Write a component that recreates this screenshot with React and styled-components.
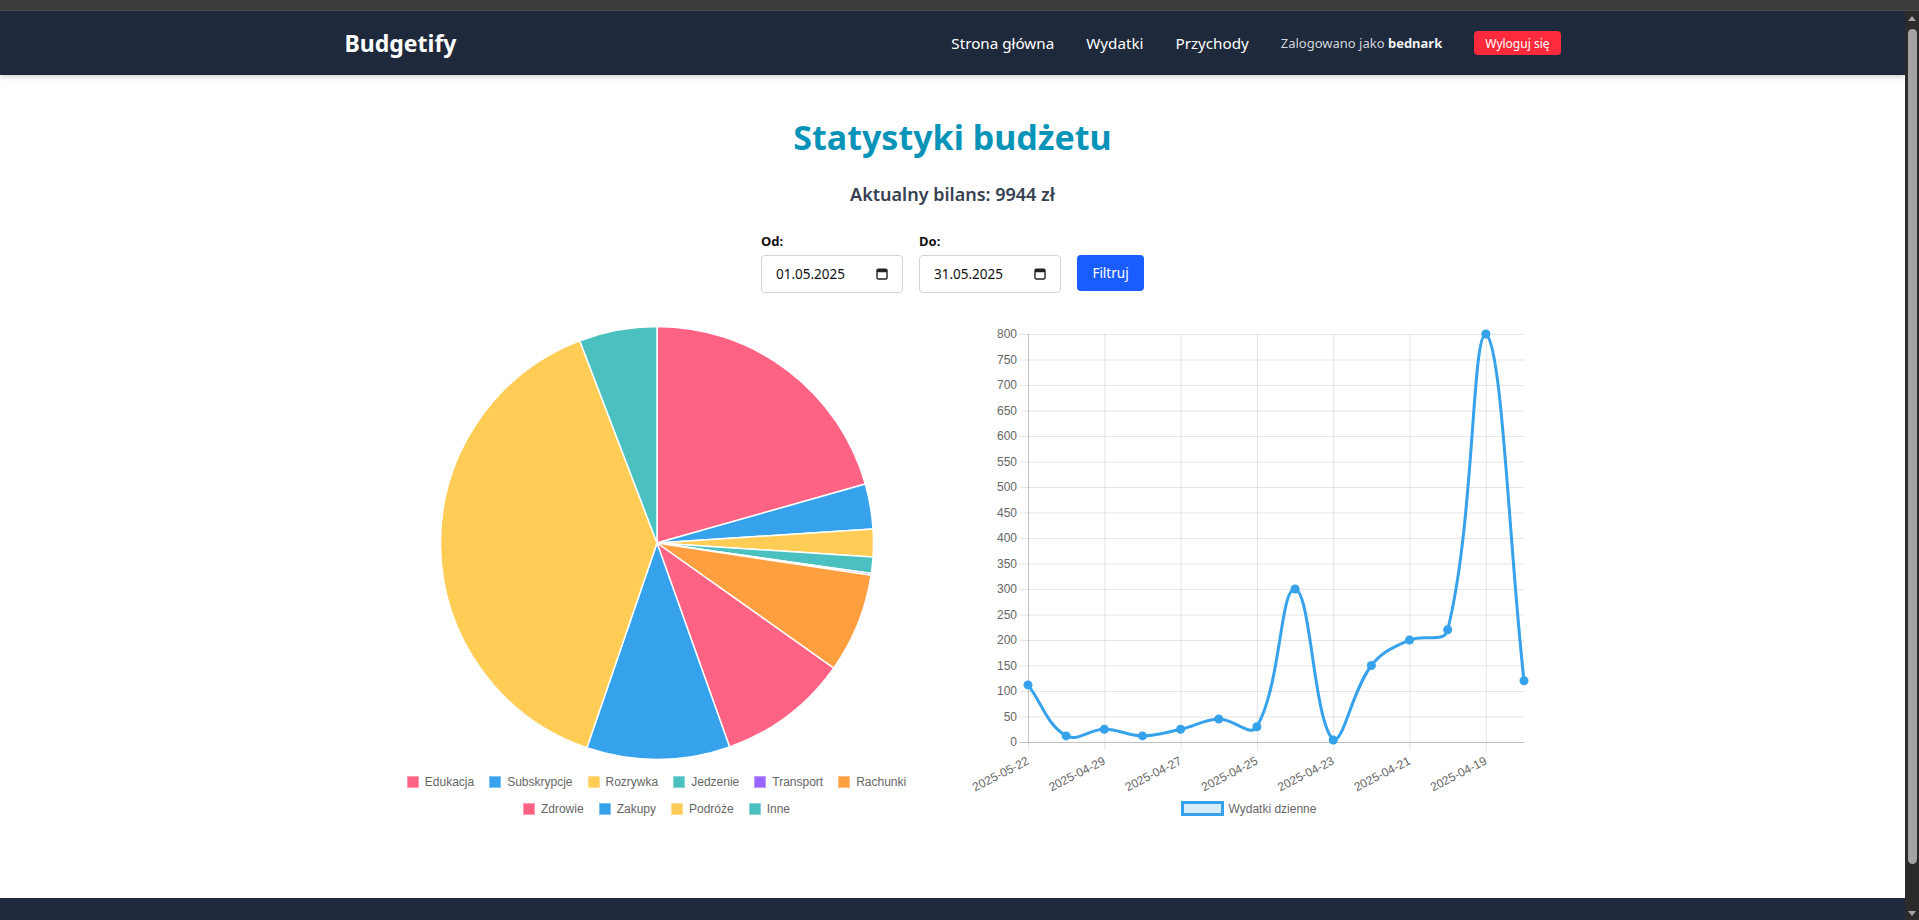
import React from 'react';
import styled, { createGlobalStyle } from 'styled-components';

const GlobalStyle = createGlobalStyle`
  html, body { margin: 0; padding: 0; height: 100%; overflow: hidden; }
  body { font-family: "Noto Sans", "Open Sans", sans-serif; background: #3b3b3b; }
  #root { height: 100%; }
  * { box-sizing: border-box; }
`;

const Frame = styled.div`
  height: 100vh;
  display: flex;
  flex-direction: column;
`;

const TopStrip = styled.div`
  height: 11px;
  flex-shrink: 0;
  background: #3b3b3b;
  border-bottom: 1px solid #4d4d4d;
`;

const Body = styled.div`
  flex: 1;
  min-height: 0;
  display: flex;
`;

const Viewport = styled.div`
  flex: 1;
  min-width: 0;
  overflow: hidden;
  background: #fff;
  display: flex;
  flex-direction: column;
`;

const Scrollbar = styled.div`
  width: 14px;
  flex-shrink: 0;
  background: #2b2b2b;
  display: flex;
  flex-direction: column;
  align-items: center;
  padding: 5px 0 4px;
`;

const Arrow = styled.span`
  width: 0;
  height: 0;
  border-left: 4.5px solid transparent;
  border-right: 4.5px solid transparent;
  ${p => (p.$down ? 'border-top: 5px solid #a3a3a3;' : 'border-bottom: 5px solid #a3a3a3;')}
`;

const Thumb = styled.span`
  width: 9px;
  height: 835px;
  margin: 8px 0 auto;
  border-radius: 4.5px;
  background: #a3a3a3;
`;

const Nav = styled.nav`
  flex-shrink: 0;
  height: 64px;
  background: #1e293b;
  box-shadow: 0 2px 5px rgba(0, 0, 0, 0.18);
  position: relative;
  z-index: 1;
`;

const Container = styled.div`
  max-width: 1280px;
  margin: 0 auto;
  padding: 0 32px;
  height: 100%;
`;

const NavInner = styled(Container)`
  display: flex;
  align-items: center;
  justify-content: space-between;
`;

const Brand = styled.a`
  color: #fff;
  font-weight: 700;
  font-size: 23px;
  text-decoration: none;
`;

const NavLinks = styled.div`
  display: flex;
  align-items: center;
  gap: 32px;
`;

const NavLink = styled.a`
  color: #fff;
  font-size: 15.2px;
  text-decoration: none;
`;

const UserInfo = styled.span`
  color: #d1d5db;
  font-size: 13px;
  b { color: #f3f4f6; font-weight: 700; }
`;

const LogoutButton = styled.button`
  height: 24px;
  padding: 0 11px;
  border: none;
  border-radius: 4px;
  background: #ff2b3c;
  color: #fff;
  font-family: inherit;
  font-size: 12px;
`;

const Main = styled.main`
  flex-shrink: 0;
  padding: 42px 0 82px;
  text-align: center;
`;

const Title = styled.h1`
  margin: 0;
  font-size: 34px;
  line-height: 40px;
  font-weight: 700;
  color: #0893b9;
`;

const Balance = styled.p`
  margin: 23px 0 0;
  font-size: 18px;
  line-height: 28px;
  font-weight: 600;
  color: #374151;
`;

const FilterRow = styled.form`
  margin-top: 23px;
  display: flex;
  justify-content: center;
  align-items: flex-end;
  gap: 16px;
`;

const Field = styled.div`
  display: flex;
  flex-direction: column;
  gap: 4px;
  text-align: left;
`;

const FieldLabel = styled.label`
  font-size: 13px;
  line-height: 20px;
  font-weight: 700;
  color: #111;
`;

const DateBox = styled.div`
  width: 142px;
  height: 38px;
  border: 1px solid #d1d5db;
  border-radius: 4px;
  padding: 0 14px;
  display: flex;
  align-items: center;
  gap: 8px;
`;

const DateInput = styled.input`
  flex: 1;
  min-width: 0;
  border: none;
  outline: none;
  padding: 0;
  background: transparent;
  font-family: "Noto Sans", sans-serif;
  font-size: 13.5px;
  color: #111;
`;

const FilterButton = styled.button`
  width: 67px;
  height: 36px;
  margin-bottom: 2px;
  border: none;
  border-radius: 4px;
  background: #195cff;
  color: #fff;
  font-family: inherit;
  font-size: 13.5px;
`;

const ChartsRow = styled.section`
  margin-top: 33px;
  display: flex;
  justify-content: center;
  align-items: flex-start;
  gap: 32px;
`;

const ChartCard = styled.div`
  width: 560px;
  display: flex;
  flex-direction: column;
`;

const ChartSvg = styled.svg`
  display: block;
  font-family: "Liberation Sans", Arial, sans-serif;
`;

const Legend = styled.div`
  display: flex;
  flex-wrap: wrap;
  justify-content: center;
  column-gap: 15px;
  row-gap: 15px;
  padding-top: ${p => p.$top}px;
`;

const LegendItem = styled.span`
  display: flex;
  align-items: center;
  gap: ${p => (p.$wide ? 5 : 6)}px;
  height: ${p => (p.$wide ? 15 : 12)}px;
  font-family: "Liberation Sans", Arial, sans-serif;
  font-size: 12px;
  line-height: 12px;
  color: #666;
`;

const Swatch = styled.span`
  width: 12px;
  height: 12px;
  background: ${p => p.$color};
  box-shadow: inset 0 0 0 1px rgba(255, 255, 255, 0.35);
`;

const WideSwatch = styled.span`
  width: 43px;
  height: 15px;
  border: 3px solid #36a2eb;
  background: rgba(54, 162, 235, 0.2);
`;

const Footer = styled.footer`
  flex-shrink: 0;
  height: 67px;
  background: #1e293b;
`;

const PINK = '#ff6384';
const BLUE = '#36a2eb';
const YELLOW = '#ffcd56';
const TEAL = '#4bc0c0';
const PURPLE = '#9966ff';
const ORANGE = '#ff9f40';

const categories = [
  { name: 'Edukacja', value: 742, color: PINK },
  { name: 'Subskrypcje', value: 121, color: BLUE },
  { name: 'Rozrywka', value: 74, color: YELLOW },
  { name: 'Jedzenie', value: 44, color: TEAL },
  { name: 'Transport', value: 5, color: PURPLE },
  { name: 'Rachunki', value: 267, color: ORANGE },
  { name: 'Zdrowie', value: 351, color: PINK },
  { name: 'Zakupy', value: 385, color: BLUE },
  { name: 'Podróże', value: 1402, color: YELLOW },
  { name: 'Inne', value: 209, color: TEAL },
];

const daily = [
  ['2025-05-22', 112], ['2025-04-30', 12], ['2025-04-29', 25], ['2025-04-28', 12],
  ['2025-04-27', 25], ['2025-04-26', 45], ['2025-04-25', 30], ['2025-04-24', 300],
  ['2025-04-23', 4], ['2025-04-22', 150], ['2025-04-21', 200], ['2025-04-20', 220],
  ['2025-04-19', 800], ['2025-04-18', 120],
];

function PieChart() {
  const cx = 280, cy = 217, r = 216.5;
  const total = categories.reduce((s, c) => s + c.value, 0);
  let acc = 0;
  const slices = categories.map(c => {
    const a0 = (acc / total) * Math.PI * 2 - Math.PI / 2;
    acc += c.value;
    const a1 = (acc / total) * Math.PI * 2 - Math.PI / 2;
    const large = a1 - a0 > Math.PI ? 1 : 0;
    const x0 = cx + r * Math.cos(a0), y0 = cy + r * Math.sin(a0);
    const x1 = cx + r * Math.cos(a1), y1 = cy + r * Math.sin(a1);
    const d = `M${cx},${cy} L${x0.toFixed(2)},${y0.toFixed(2)} A${r},${r} 0 ${large} 1 ${x1.toFixed(2)},${y1.toFixed(2)} Z`;
    return <path key={c.name} d={d} fill={c.color} stroke="#fff" strokeWidth="1.5" strokeLinejoin="round" />;
  });
  return (
    <ChartCard>
      <ChartSvg width="560" height="434" viewBox="0 0 560 434">{slices}</ChartSvg>
      <Legend $top={16}>
        {categories.map(c => (
          <LegendItem key={c.name}>
            <Swatch $color={c.color} />
            {c.name}
          </LegendItem>
        ))}
      </Legend>
    </ChartCard>
  );
}

function LineChart() {
  const L = 59, R = 555, T = 8, B = 416;
  const n = daily.length;
  const step = (R - L) / (n - 1);
  const yOf = v => B - (v / 800) * (B - T);
  const pts = daily.map(([, v], i) => ({ x: L + i * step, y: yOf(v) }));
  const t = 0.4;
  const cap = (v, lo, hi) => Math.max(Math.min(v, hi), lo);
  const cps = pts.map((p, i) => {
    const prev = pts[i - 1] || p;
    const next = pts[i + 1] || p;
    const d01 = Math.hypot(p.x - prev.x, p.y - prev.y);
    const d12 = Math.hypot(next.x - p.x, next.y - p.y);
    let s01 = d01 / (d01 + d12);
    let s12 = d12 / (d01 + d12);
    if (isNaN(s01)) s01 = 0;
    if (isNaN(s12)) s12 = 0;
    const fa = t * s01, fb = t * s12;
    return {
      c1x: cap(p.x - fa * (next.x - prev.x), L, R),
      c1y: cap(p.y - fa * (next.y - prev.y), T, B),
      c2x: cap(p.x + fb * (next.x - prev.x), L, R),
      c2y: cap(p.y + fb * (next.y - prev.y), T, B),
    };
  });
  let d = `M${pts[0].x},${pts[0].y}`;
  for (let i = 1; i < n; i++) {
    d += ` C${cps[i - 1].c2x.toFixed(2)},${cps[i - 1].c2y.toFixed(2)} ${cps[i].c1x.toFixed(2)},${cps[i].c1y.toFixed(2)} ${pts[i].x.toFixed(2)},${pts[i].y.toFixed(2)}`;
  }
  const ticks = [];
  for (let v = 0; v <= 800; v += 50) ticks.push(v);
  const grid = 'rgba(0,0,0,0.1)';
  return (
    <ChartCard>
      <ChartSvg width="560" height="475" viewBox="0 0 560 475">
        {ticks.map(v => (
          <g key={v}>
            <line x1={L - 8} x2={R} y1={yOf(v) + 0.5} y2={yOf(v) + 0.5} stroke={grid} />
            <text x={L - 11} y={yOf(v)} textAnchor="end" dominantBaseline="central" fontSize="12" fill="#666">{v}</text>
          </g>
        ))}
        {daily.map(([label], i) => (i % 2 === 0 ? (
          <g key={label}>
            <line x1={L + i * step + 0.5} x2={L + i * step + 0.5} y1={T} y2={B + 8} stroke={grid} />
            <text
              x={L + i * step}
              y={B + 18}
              textAnchor="end"
              dominantBaseline="central"
              fontSize="12"
              fill="#666"
              transform={`rotate(-27 ${L + i * step} ${B + 18})`}
            >{label}</text>
          </g>
        ) : null))}
        <line x1={L + 0.5} x2={L + 0.5} y1={T} y2={B} stroke="rgba(0,0,0,0.16)" />
        <line x1={L - 8} x2={R} y1={B + 0.5} y2={B + 0.5} stroke="rgba(0,0,0,0.16)" />
        <path d={d} fill="none" stroke={BLUE} strokeWidth="3" strokeLinejoin="round" />
        {pts.map((p, i) => <circle key={i} cx={p.x} cy={p.y} r="4.5" fill={BLUE} />)}
      </ChartSvg>
      <Legend $top={0}>
        <LegendItem $wide>
          <WideSwatch />
          Wydatki dzienne
        </LegendItem>
      </Legend>
    </ChartCard>
  );
}

function CalendarIcon() {
  return (
    <svg width="12" height="12" viewBox="0 0 12 12" aria-hidden="true">
      <rect x="1" y="1.2" width="10" height="9.8" rx="1.3" fill="none" stroke="#222" strokeWidth="1.4" />
      <rect x="1" y="1.2" width="10" height="3" rx="1" fill="#222" />
    </svg>
  );
}

export default function App() {
  return (
    <>
      <GlobalStyle />
      <Frame>
        <TopStrip />
        <Body>
          <Viewport>
            <Nav>
              <NavInner>
                <Brand href="#">Budgetify</Brand>
                <NavLinks>
                  <NavLink href="#">Strona główna</NavLink>
                  <NavLink href="#">Wydatki</NavLink>
                  <NavLink href="#">Przychody</NavLink>
                  <UserInfo>Zalogowano jako <b>bednark</b></UserInfo>
                  <LogoutButton type="button">Wyloguj się</LogoutButton>
                </NavLinks>
              </NavInner>
            </Nav>
            <Main>
              <Title>Statystyki budżetu</Title>
              <Balance>Aktualny bilans: 9944 zł</Balance>
              <FilterRow onSubmit={e => e.preventDefault()}>
                <Field>
                  <FieldLabel>Od:</FieldLabel>
                  <DateBox>
                    <DateInput readOnly value="01.05.2025" />
                    <CalendarIcon />
                  </DateBox>
                </Field>
                <Field>
                  <FieldLabel>Do:</FieldLabel>
                  <DateBox>
                    <DateInput readOnly value="31.05.2025" />
                    <CalendarIcon />
                  </DateBox>
                </Field>
                <FilterButton type="submit">Filtruj</FilterButton>
              </FilterRow>
              <ChartsRow>
                <PieChart />
                <LineChart />
              </ChartsRow>
            </Main>
            <Footer />
          </Viewport>
          <Scrollbar aria-hidden="true">
            <Arrow />
            <Thumb />
            <Arrow $down />
          </Scrollbar>
        </Body>
      </Frame>
    </>
  );
}
